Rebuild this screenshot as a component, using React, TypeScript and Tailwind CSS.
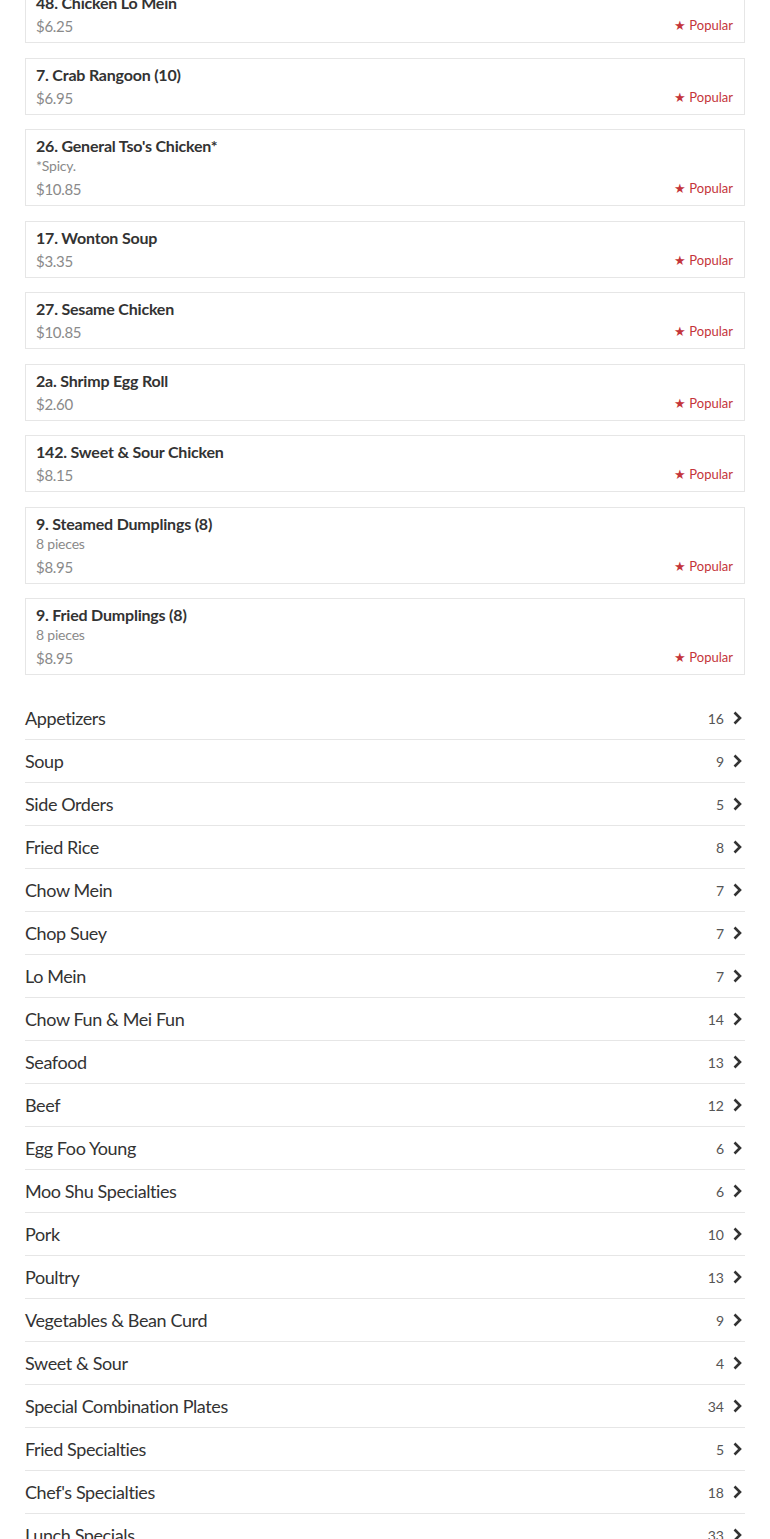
import React from "react";

type Item = { name: string; desc?: string; price: string };

const items: Item[] = [
  { name: "48. Chicken Lo Mein", price: "$6.25" },
  { name: "7. Crab Rangoon (10)", price: "$6.95" },
  { name: "26. General Tso's Chicken*", desc: "*Spicy.", price: "$10.85" },
  { name: "17. Wonton Soup", price: "$3.35" },
  { name: "27. Sesame Chicken", price: "$10.85" },
  { name: "2a. Shrimp Egg Roll", price: "$2.60" },
  { name: "142. Sweet & Sour Chicken", price: "$8.15" },
  { name: "9. Steamed Dumplings (8)", desc: "8 pieces", price: "$8.95" },
  { name: "9. Fried Dumplings (8)", desc: "8 pieces", price: "$8.95" },
];

const cats: [string, number][] = [
  ["Appetizers", 16],
  ["Soup", 9],
  ["Side Orders", 5],
  ["Fried Rice", 8],
  ["Chow Mein", 7],
  ["Chop Suey", 7],
  ["Lo Mein", 7],
  ["Chow Fun & Mei Fun", 14],
  ["Seafood", 13],
  ["Beef", 12],
  ["Egg Foo Young", 6],
  ["Moo Shu Specialties", 6],
  ["Pork", 10],
  ["Poultry", 13],
  ["Vegetables & Bean Curd", 9],
  ["Sweet & Sour", 4],
  ["Special Combination Plates", 34],
  ["Fried Specialties", 5],
  ["Chef's Specialties", 18],
  ["Lunch Specials", 33],
];

function Chevron() {
  return (
    <svg width="11" height="14" viewBox="0 0 11 14" className="shrink-0">
      <polyline
        points="2.5,1.5 8,7 2.5,12.5"
        fill="none"
        stroke="#333"
        strokeWidth="2.6"
        strokeLinecap="butt"
        strokeLinejoin="miter"
      />
    </svg>
  );
}

export default function App() {
  return (
    <div
      className="w-[770px] h-[1539px] overflow-hidden bg-white"
      style={{ fontFamily: "Lato, 'Liberation Sans', sans-serif" }}
    >
      <div className="px-[25px] -mt-[14px]">
        <div className="flex flex-col gap-[14.5px]">
          {items.map((it, i) => (
            <div
              key={i}
              className="border border-[#e6e6e6] pt-[6px] pb-[7px] pl-[10px] pr-[11px]"
            >
              <div className="text-[16px] leading-[20px] font-bold text-[#333] tracking-[-0.2px]">
                {it.name}
              </div>
              {it.desc && (
                <div className="text-[14px] leading-[20px] text-[#8a8a8a] tracking-[-0.2px]">
                  {it.desc}
                </div>
              )}
              <div className="flex items-start justify-between h-[22px]">
                <span className="text-[15px] leading-[22px] mt-[2px] text-[#8a8a8a] tracking-[-0.3px]">
                  {it.price}
                </span>
                <span className="text-[13px] leading-[22px] mt-[1px] text-[#c4343a]">
                  ★ Popular
                </span>
              </div>
            </div>
          ))}
        </div>
        <div className="mt-[22px]">
          {cats.map(([name, n], i) => (
            <div
              key={i}
              className="flex items-center justify-between h-[43px] border-b border-[#e6e6e6]"
            >
              <span className="text-[18px] text-[#333] tracking-[-0.4px]">{name}</span>
              <div className="flex items-center gap-[8px] pr-[2px]">
                <span className="text-[14px] text-[#555]">{n}</span>
                <Chevron />
              </div>
            </div>
          ))}
        </div>
      </div>
    </div>
  );
}
